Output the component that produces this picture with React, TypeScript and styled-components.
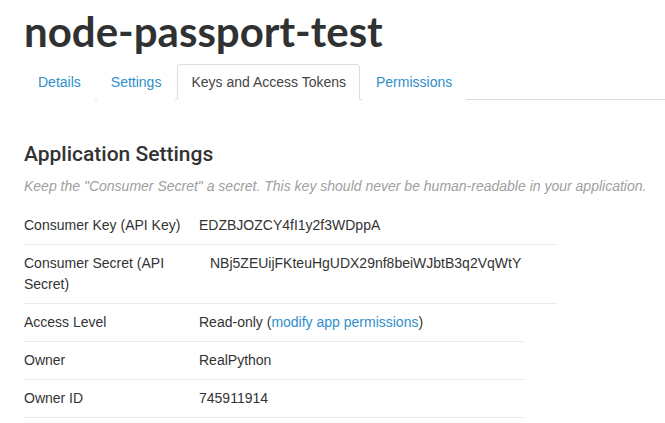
import React from "react";
import styled, { createGlobalStyle } from "styled-components";

const Global = createGlobalStyle`
  html, body { margin: 0; padding: 0; background: #fff; }
  body { font-family: "Liberation Sans", Arial, sans-serif; color: #333; }
`;

const Page = styled.div`
  padding: 9px 0 0 24px;
  width: 641px;
  overflow: hidden;
`;

const Title = styled.h1`
  margin: 0;
  font-family: "Lato", "Open Sans", sans-serif;
  font-weight: 700;
  font-size: 42px;
  line-height: 45px;
  color: #2f3133;
`;

const Tabs = styled.ul`
  display: flex;
  list-style: none;
  margin: 10px 0 0 0;
  padding: 0;
  border-bottom: 1px solid #ddd;
`;

const Tab = styled.li<{ $active?: boolean }>`
  margin: 0 2px -1px 0;
  padding: 0 13px;
  height: 34px;
  display: flex;
  align-items: center;
  font-size: 14px;
  color: ${(p) => (p.$active ? "#444" : "#2f8fcb")};
  background: #fff;
  border: 1px solid ${(p) => (p.$active ? "#ddd" : "transparent")};
  border-bottom-color: ${(p) => (p.$active ? "#fff" : "transparent")};
  border-radius: 4px 4px 0 0;
`;

const Heading = styled.h2`
  margin: 41px 0 0 0;
  font-family: "Roboto", "Liberation Sans", sans-serif;
  font-weight: 500;
  font-size: 21px;
  line-height: 27px;
  color: #333;
`;

const Note = styled.p`
  margin: 8px 0 0 0;
  font-size: 14px;
  font-style: italic;
  line-height: 20px;
  color: #a0a0a0;
`;

const Table = styled.div`
  margin-top: 11px;
  display: flex;
  flex-direction: column;
`;

const Row = styled.div<{ $width: number }>`
  display: flex;
  width: ${(p) => p.$width}px;
  padding: 8px 0;
  border-bottom: 1px solid #eaeaea;
  font-size: 14px;
  line-height: 21px;
  color: #333;
`;

const Label = styled.div<{ $width: number; $gap: number }>`
  flex: 0 0 ${(p) => p.$width}px;
  box-sizing: border-box;
  padding-right: ${(p) => p.$gap}px;
`;

const Value = styled.div`
  flex: 1;
`;

const Link = styled.a`
  color: #2f8fcb;
  text-decoration: none;
`;

export default function App() {
  return (
    <>
      <Global />
      <Page>
        <Title>node-passport-test</Title>
        <Tabs>
          <Tab>Details</Tab>
          <Tab>Settings</Tab>
          <Tab $active>Keys and Access Tokens</Tab>
          <Tab>Permissions</Tab>
        </Tabs>
        <Heading>Application Settings</Heading>
        <Note>
          Keep the "Consumer Secret" a secret. This key should never be human-readable in your application.
        </Note>
        <Table>
          <Row $width={533}>
            <Label $width={175} $gap={18}>Consumer Key (API Key)</Label>
            <Value>EDZBJOZCY4fI1y2f3WDppA</Value>
          </Row>
          <Row $width={533}>
            <Label $width={186} $gap={26}>Consumer Secret (API Secret)</Label>
            <Value>NBj5ZEUijFKteuHgUDX29nf8beiWJbtB3q2VqWtY</Value>
          </Row>
          <Row $width={500}>
            <Label $width={175} $gap={18}>Access Level</Label>
            <Value>
              Read-only (<Link href="#">modify app permissions</Link>)
            </Value>
          </Row>
          <Row $width={500}>
            <Label $width={175} $gap={18}>Owner</Label>
            <Value>RealPython</Value>
          </Row>
          <Row $width={500}>
            <Label $width={175} $gap={18}>Owner ID</Label>
            <Value>745911914</Value>
          </Row>
        </Table>
      </Page>
    </>
  );
}
